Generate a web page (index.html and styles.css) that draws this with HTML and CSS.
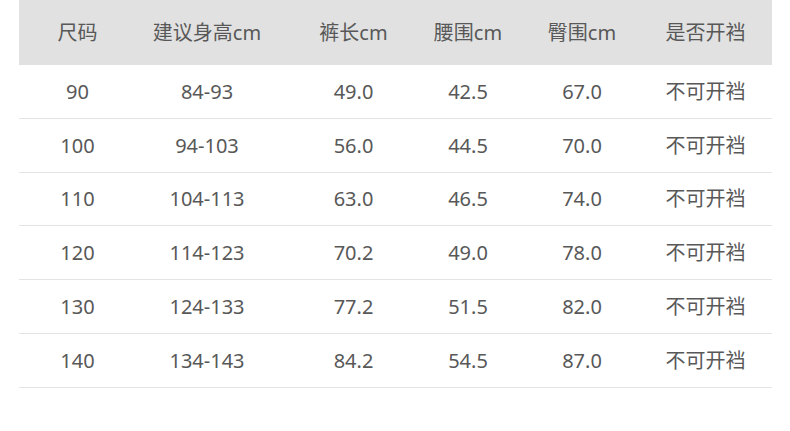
FILE: index.html
```html
<!DOCTYPE html>
<html lang="zh">
<head>
<meta charset="utf-8">
<link rel="stylesheet" href="styles.css">
</head>
<body>
<div class="table">
  <div class="row head">
    <div>尺码</div><div>建议身高cm</div><div>裤长cm</div><div>腰围cm</div><div>臀围cm</div><div class="last">是否开裆</div>
  </div>
  <div class="row"><div>90</div><div>84-93</div><div>49.0</div><div>42.5</div><div>67.0</div><div class="last">不可开裆</div></div>
  <div class="row"><div>100</div><div>94-103</div><div>56.0</div><div>44.5</div><div>70.0</div><div class="last">不可开裆</div></div>
  <div class="row"><div>110</div><div>104-113</div><div>63.0</div><div>46.5</div><div>74.0</div><div class="last">不可开裆</div></div>
  <div class="row"><div>120</div><div>114-123</div><div>70.2</div><div>49.0</div><div>78.0</div><div class="last">不可开裆</div></div>
  <div class="row"><div>130</div><div>124-133</div><div>77.2</div><div>51.5</div><div>82.0</div><div class="last">不可开裆</div></div>
  <div class="row"><div>140</div><div>134-143</div><div>84.2</div><div>54.5</div><div>87.0</div><div class="last">不可开裆</div></div>
</div>
</body>
</html>
```
FILE: styles.css
```css
html, body {
  margin: 0;
  padding: 0;
  background: #ffffff;
}
body {
  font-family: "Noto Sans", "Noto Sans CJK SC", sans-serif;
  color: #585858;
  font-size: 20px;
}
.table {
  margin-left: 19px;
  width: 753px;
}
.row {
  display: grid;
  grid-template-columns: 117px 142px 151px 78px 150px 115px;
  align-items: center;
  height: 53.8px;
  box-sizing: border-box;
  border-bottom: 1px solid #e4e4e4;
  padding-top: 1px;
}
.row > div {
  text-align: center;
  white-space: nowrap;
  line-height: 1;
}
.row > .last {
  padding-right: 18px;
}
.row.head {
  height: 65px;
  background: #e1e1e1;
  border-bottom: none;
}
```
